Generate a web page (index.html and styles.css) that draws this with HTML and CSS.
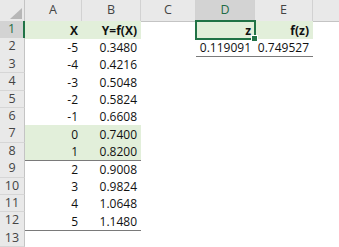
FILE: index.html
```html
<!DOCTYPE html>
<html lang="en">
<head>
  <meta charset="utf-8">
  <title>Sheet1</title>
  <link rel="stylesheet" href="styles.css">
</head>
<body>
  <div class="sheet">
    <div class="row head">
      <div class="corner">
        <svg viewBox="0 0 12 11" width="12" height="11"><polygon points="0,11 12,0 12,11" fill="#b7b7b7"/></svg>
      </div>
      <div class="col">A</div>
      <div class="col">B</div>
      <div class="col">C</div>
      <div class="col sel">D</div>
      <div class="col">E</div>
      <div class="col last"></div>
    </div>

    <div class="row">
      <div class="rn sel">1</div>
      <div class="c fill bold">X</div>
      <div class="c fill bold">Y=f(X)</div>
      <div class="c"></div>
      <div class="c fill bold active">z</div>
      <div class="c fill bold">f(z)</div>
      <div class="c"></div>
    </div>
    <div class="row">
      <div class="rn">2</div>
      <div class="c">-5</div>
      <div class="c">0.3480</div>
      <div class="c"></div>
      <div class="c line">0.119091</div>
      <div class="c line">0.749527</div>
      <div class="c"></div>
    </div>
    <div class="row">
      <div class="rn">3</div>
      <div class="c">-4</div>
      <div class="c">0.4216</div>
      <div class="c"></div><div class="c"></div><div class="c"></div><div class="c"></div>
    </div>
    <div class="row">
      <div class="rn">4</div>
      <div class="c">-3</div>
      <div class="c">0.5048</div>
      <div class="c"></div><div class="c"></div><div class="c"></div><div class="c"></div>
    </div>
    <div class="row">
      <div class="rn">5</div>
      <div class="c">-2</div>
      <div class="c">0.5824</div>
      <div class="c"></div><div class="c"></div><div class="c"></div><div class="c"></div>
    </div>
    <div class="row">
      <div class="rn">6</div>
      <div class="c line">-1</div>
      <div class="c line">0.6608</div>
      <div class="c"></div><div class="c"></div><div class="c"></div><div class="c"></div>
    </div>
    <div class="row">
      <div class="rn">7</div>
      <div class="c fill">0</div>
      <div class="c fill">0.7400</div>
      <div class="c"></div><div class="c"></div><div class="c"></div><div class="c"></div>
    </div>
    <div class="row">
      <div class="rn">8</div>
      <div class="c fill line">1</div>
      <div class="c fill line">0.8200</div>
      <div class="c"></div><div class="c"></div><div class="c"></div><div class="c"></div>
    </div>
    <div class="row">
      <div class="rn">9</div>
      <div class="c">2</div>
      <div class="c">0.9008</div>
      <div class="c"></div><div class="c"></div><div class="c"></div><div class="c"></div>
    </div>
    <div class="row">
      <div class="rn">10</div>
      <div class="c">3</div>
      <div class="c">0.9824</div>
      <div class="c"></div><div class="c"></div><div class="c"></div><div class="c"></div>
    </div>
    <div class="row">
      <div class="rn">11</div>
      <div class="c">4</div>
      <div class="c">1.0648</div>
      <div class="c"></div><div class="c"></div><div class="c"></div><div class="c"></div>
    </div>
    <div class="row">
      <div class="rn">12</div>
      <div class="c line">5</div>
      <div class="c line">1.1480</div>
      <div class="c"></div><div class="c"></div><div class="c"></div><div class="c"></div>
    </div>
    <div class="row">
      <div class="rn">13</div>
      <div class="c"></div><div class="c"></div><div class="c"></div><div class="c"></div><div class="c"></div><div class="c"></div>
    </div>
  </div>
</body>
</html>
```

FILE: styles.css
```css
* {
  box-sizing: border-box;
  margin: 0;
  padding: 0;
}
body {
  background: #fff;
  font-family: 'Open Sans', 'Noto Sans', sans-serif;
  font-size: 12px;
  color: #111;
  overflow: hidden;
}
.sheet {
  width: 339px;
}
.row {
  display: grid;
  grid-template-columns: 25px 57px 59px 55px 59px 58px 1fr;
  height: 17.4px;
}
.row.head {
  height: 21px;
}

/* column headers */
.corner,
.col {
  background: #e9e9e9;
  border-bottom: 1px solid #c4c4c4;
}
.corner {
  border-right: 1px solid #c4c4c4;
  display: flex;
  align-items: flex-end;
  justify-content: flex-end;
  padding: 0 2px 2px 0;
}
.corner svg {
  display: block;
}
.col {
  border-right: 1px solid #d2d2d2;
  text-align: center;
  line-height: 20px;
  font-size: 12.5px;
  color: #444;
}
.col.sel {
  background: #d3d3d3;
  color: #1e6b44;
  border-bottom: 2px solid #217346;
}
.col.last {
  border-right: none;
}

/* row numbers */
.rn {
  background: #e9e9e9;
  border-right: 1px solid #c4c4c4;
  border-bottom: 1px solid #d6d6d6;
  text-align: center;
  font-size: 12.5px;
  line-height: 16px;
  color: #444;
}
.rn.sel {
  background: #d3d3d3;
  color: #1e6b44;
  border-right: 2px solid #217346;
}

/* cells */
.c {
  text-align: right;
  padding: 1.5px 4px 0 0;
  line-height: 16px;
  white-space: nowrap;
}
.c.fill {
  background: #e2efda;
}
.c.bold {
  font-weight: 700;
}
.c.line {
  border-bottom: 1px solid #7a7a7a;
}
.c.active {
  position: relative;
  outline: 2px solid #217346;
  outline-offset: -1px;
}
.c.active::after {
  content: '';
  position: absolute;
  right: -3px;
  bottom: -3px;
  width: 5px;
  height: 5px;
  background: #217346;
  border: 1px solid #fff;
}
```
